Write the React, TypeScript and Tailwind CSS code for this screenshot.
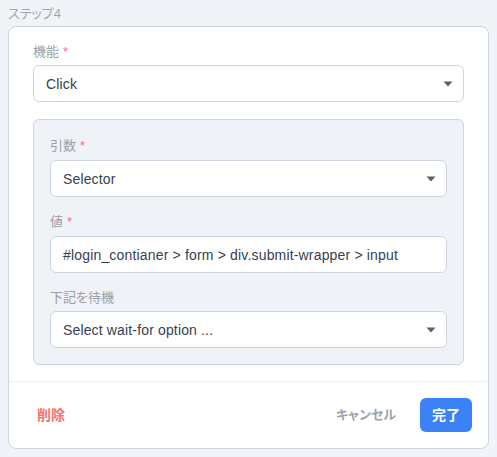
import React from 'react';

const jp = "font-['Liberation_Sans','Noto_Sans_CJK_JP',sans-serif] [font-feature-settings:'palt']";

const Caret = () => (
  <svg width="10" height="6" viewBox="0 0 10 6" className="shrink-0">
    <path d="M0.5 0.5 L9.5 0.5 L5 5.5 Z" fill="#5b5f66" />
  </svg>
);

const Label: React.FC<{ text: string; required?: boolean; tight?: boolean }> = ({ text, required, tight }) => (
  <div className={`${tight ? 'mb-[3px]' : 'mb-1'} text-[13px] leading-5 text-[#9aa0a8]`}>
    {text}
    {required && <span className="ml-1 text-[#f87171]">*</span>}
  </div>
);

const Select: React.FC<{ value: string }> = ({ value }) => (
  <div className="flex h-[37px] items-center justify-between rounded-md border border-[#cdd5e0] bg-white pl-3 pr-[10px]">
    <span className="text-sm tracking-[0.15px] text-[#374151]">{value}</span>
    <Caret />
  </div>
);

export default function App() {
  return (
    <div className={`min-h-[457px] bg-[#f0f3f8] px-2 pb-2 ${jp}`}>
      <div className="pt-[2px] text-[13px] leading-6 text-[#a0a6ae]">ステップ4</div>

      <div className="rounded-lg border border-[#cdd5e0] bg-white">
        <div className="px-6 pb-4 pt-[15px]">
          <Label text="機能" required tight />
          <Select value="Click" />

          <div className="mt-[17px] rounded-md border border-[#cdd5e0] bg-[#eff2f7] px-4 pb-4 pt-4">
            <Label text="引数" required />
            <Select value="Selector" />

            <div className="mt-[15px]">
              <Label text="値" required />
              <div className="flex h-[37px] items-center rounded-md border border-[#cdd5e0] bg-white px-3 text-sm tracking-[0.17px] text-[#374151]">
                #login_contianer &gt; form &gt; div.submit-wrapper &gt; input
              </div>
            </div>

            <div className="mt-[15px]">
              <Label text="下記を待機" tight />
              <Select value="Select wait-for option ..." />
            </div>
          </div>
        </div>

        <div className="flex items-center justify-between border-t border-[#eef0f3] px-4 py-4">
          <button className="h-[34px] px-3 text-sm font-bold text-[#f87171]">削除</button>
          <div className="flex items-center gap-3">
            <button className="h-[34px] px-3 text-[13px] font-bold text-[#9ca3af]">キャンセル</button>
            <button className="h-[34px] rounded-md bg-[#3b82f6] px-3 text-sm font-bold text-white">完了</button>
          </div>
        </div>
      </div>
    </div>
  );
}
